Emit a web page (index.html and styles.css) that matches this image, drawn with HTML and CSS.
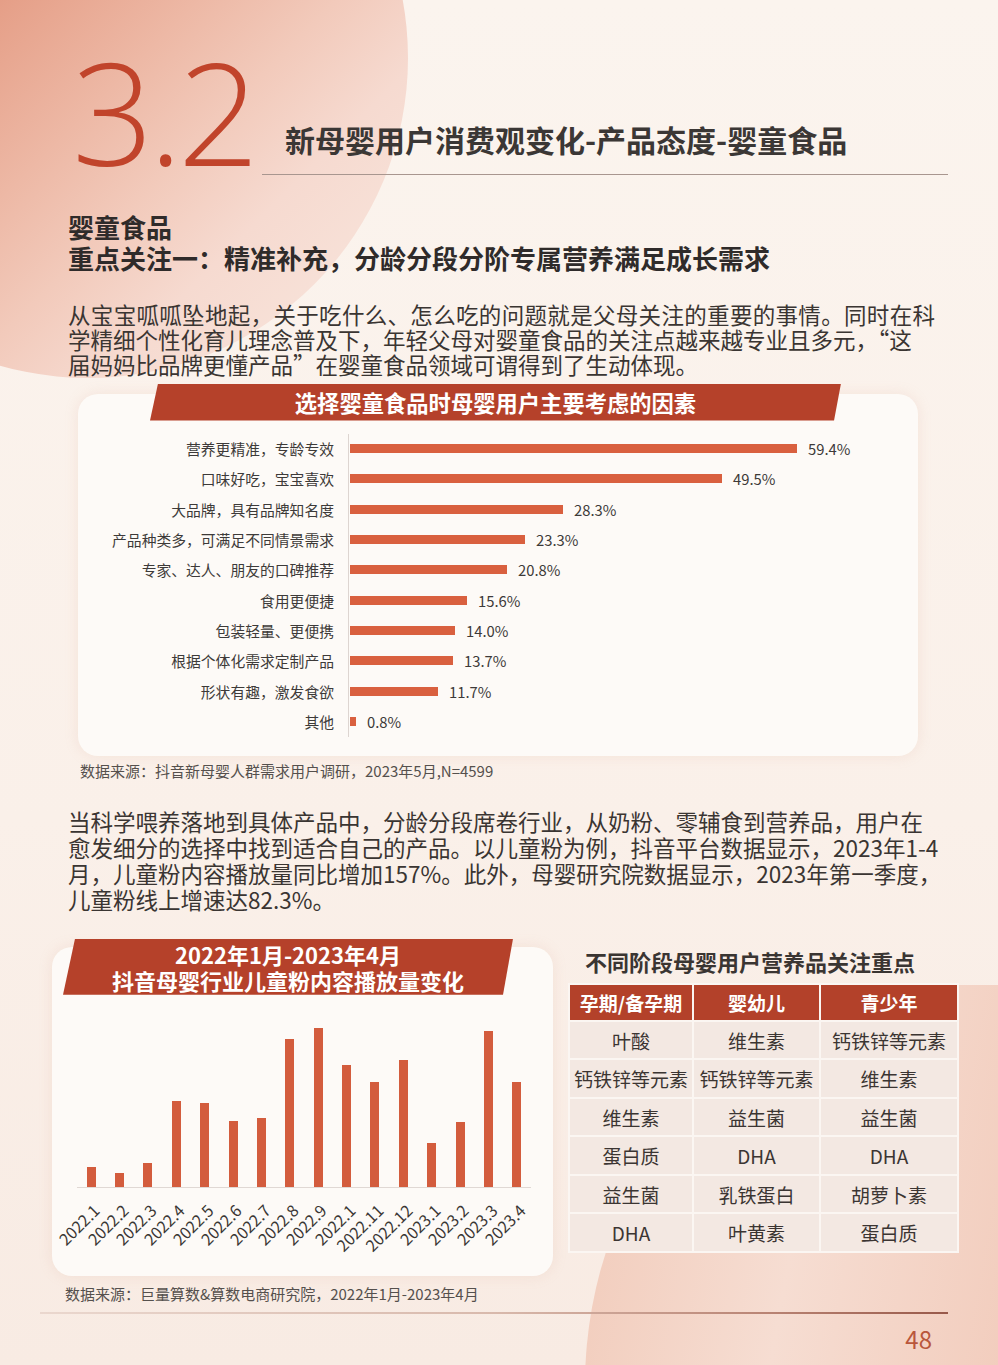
FILE: index.html
```html
<!DOCTYPE html>
<html lang="zh-CN">
<head>
<meta charset="utf-8">
<title>3.2 新母婴用户消费观变化-产品态度-婴童食品</title>
<link rel="stylesheet" href="styles.css">
</head>
<body>
<div class="page">
  <div class="content">
    <header class="hero">
      <div class="num">3.2</div>
      <div class="title-wrap"><h1 class="title">新母婴用户消费观变化-产品态度-婴童食品</h1></div>
    </header>

    <h2 class="sub">婴童食品<br>重点关注一：精准补充，分龄分段分阶专属营养满足成长需求</h2>

    <p class="para p1">
      <span class="ln just">从宝宝呱呱坠地起，关于吃什么、怎么吃的问题就是父母关注的重要的事情。同时在科</span>
      <span class="ln">学精细个性化育儿理念普及下，年轻父母对婴童食品的关注点越来越专业且多元，“这</span>
      <span class="ln">届妈妈比品牌更懂产品”在婴童食品领域可谓得到了生动体现。</span>
    </p>

    <section class="card card1">
      <div class="banner b1">选择婴童食品时母婴用户主要考虑的因素</div>
      <div class="hbars">
        <div class="hrow"><span class="hl">营养更精准，专龄专效</span><span class="hc"><i class="hb" style="width:447px"></i><b class="hv">59.4%</b></span></div>
        <div class="hrow"><span class="hl">口味好吃，宝宝喜欢</span><span class="hc"><i class="hb" style="width:372px"></i><b class="hv">49.5%</b></span></div>
        <div class="hrow"><span class="hl">大品牌，具有品牌知名度</span><span class="hc"><i class="hb" style="width:213px"></i><b class="hv">28.3%</b></span></div>
        <div class="hrow"><span class="hl">产品种类多，可满足不同情景需求</span><span class="hc"><i class="hb" style="width:175px"></i><b class="hv">23.3%</b></span></div>
        <div class="hrow"><span class="hl">专家、达人、朋友的口碑推荐</span><span class="hc"><i class="hb" style="width:157px"></i><b class="hv">20.8%</b></span></div>
        <div class="hrow"><span class="hl">食用更便捷</span><span class="hc"><i class="hb" style="width:117px"></i><b class="hv">15.6%</b></span></div>
        <div class="hrow"><span class="hl">包装轻量、更便携</span><span class="hc"><i class="hb" style="width:105px"></i><b class="hv">14.0%</b></span></div>
        <div class="hrow"><span class="hl">根据个体化需求定制产品</span><span class="hc"><i class="hb" style="width:103px"></i><b class="hv">13.7%</b></span></div>
        <div class="hrow"><span class="hl">形状有趣，激发食欲</span><span class="hc"><i class="hb" style="width:88px"></i><b class="hv">11.7%</b></span></div>
        <div class="hrow"><span class="hl">其他</span><span class="hc"><i class="hb" style="width:6px"></i><b class="hv">0.8%</b></span></div>
      </div>
    </section>
    <p class="source s1">数据来源：抖音新母婴人群需求用户调研，2023年5月,N=4599</p>

    <p class="para p2">
      <span class="ln">当科学喂养落地到具体产品中，分龄分段席卷行业，从奶粉、零辅食到营养品，用户在</span>
      <span class="ln">愈发细分的选择中找到适合自己的产品。以儿童粉为例，抖音平台数据显示，2023年1-4</span>
      <span class="ln">月，儿童粉内容播放量同比增加157%。此外，母婴研究院数据显示，2023年第一季度，</span>
      <span class="ln">儿童粉线上增速达82.3%。</span>
    </p>

    <div class="bottom">
      <div class="left">
        <section class="card card2">
          <div class="banner b2">2022年1月-2023年4月<br>抖音母婴行业儿童粉内容播放量变化</div>
          <div class="vchart">
            <div class="plot">
              <div class="col"><i class="vb" style="height:20px"></i></div>
              <div class="col"><i class="vb" style="height:14px"></i></div>
              <div class="col"><i class="vb" style="height:24px"></i></div>
              <div class="col"><i class="vb" style="height:86px"></i></div>
              <div class="col"><i class="vb" style="height:84px"></i></div>
              <div class="col"><i class="vb" style="height:66px"></i></div>
              <div class="col"><i class="vb" style="height:69px"></i></div>
              <div class="col"><i class="vb" style="height:148px"></i></div>
              <div class="col"><i class="vb" style="height:159px"></i></div>
              <div class="col"><i class="vb" style="height:122px"></i></div>
              <div class="col"><i class="vb" style="height:105px"></i></div>
              <div class="col"><i class="vb" style="height:127px"></i></div>
              <div class="col"><i class="vb" style="height:44px"></i></div>
              <div class="col"><i class="vb" style="height:65px"></i></div>
              <div class="col"><i class="vb" style="height:156px"></i></div>
              <div class="col"><i class="vb" style="height:105px"></i></div>
            </div>
            <div class="xlabels">
              <div class="xl"><div class="xlw"><span>2022.1</span></div></div>
              <div class="xl"><div class="xlw"><span>2022.2</span></div></div>
              <div class="xl"><div class="xlw"><span>2022.3</span></div></div>
              <div class="xl"><div class="xlw"><span>2022.4</span></div></div>
              <div class="xl"><div class="xlw"><span>2022.5</span></div></div>
              <div class="xl"><div class="xlw"><span>2022.6</span></div></div>
              <div class="xl"><div class="xlw"><span>2022.7</span></div></div>
              <div class="xl"><div class="xlw"><span>2022.8</span></div></div>
              <div class="xl"><div class="xlw"><span>2022.9</span></div></div>
              <div class="xl"><div class="xlw"><span>2022.1</span></div></div>
              <div class="xl"><div class="xlw"><span>2022.11</span></div></div>
              <div class="xl"><div class="xlw"><span>2022.12</span></div></div>
              <div class="xl"><div class="xlw"><span>2023.1</span></div></div>
              <div class="xl"><div class="xlw"><span>2023.2</span></div></div>
              <div class="xl"><div class="xlw"><span>2023.3</span></div></div>
              <div class="xl"><div class="xlw"><span>2023.4</span></div></div>
            </div>
          </div>
        </section>
        <p class="source s2">数据来源：巨量算数&amp;算数电商研究院，2022年1月-2023年4月</p>
      </div>

      <div class="right">
        <h3 class="ttitle">不同阶段母婴用户营养品关注重点</h3>
        <table class="ntable">
          <thead>
            <tr><th class="c1">孕期/备孕期</th><th class="c2">婴幼儿</th><th class="c3">青少年</th></tr>
          </thead>
          <tbody>
            <tr><td>叶酸</td><td>维生素</td><td>钙铁锌等元素</td></tr>
            <tr><td>钙铁锌等元素</td><td>钙铁锌等元素</td><td>维生素</td></tr>
            <tr><td>维生素</td><td>益生菌</td><td>益生菌</td></tr>
            <tr><td>蛋白质</td><td>DHA</td><td>DHA</td></tr>
            <tr><td>益生菌</td><td>乳铁蛋白</td><td>胡萝卜素</td></tr>
            <tr><td>DHA</td><td>叶黄素</td><td>蛋白质</td></tr>
          </tbody>
        </table>
      </div>
    </div>

    <footer class="foot">
      <div class="foot-line"></div>
      <div class="pno">48</div>
    </footer>
  </div>
</div>
</body>
</html>
```

FILE: styles.css
```css
* { box-sizing: border-box; }
html, body { margin: 0; padding: 0; }
body {
  background: #faf1ea;
  font-family: "Noto Sans CJK SC", "Noto Sans", sans-serif;
  color: #3a3431;
}
.page {
  position: relative;
  width: 998px;
  height: 1365px;
  overflow: hidden;
  background: linear-gradient(180deg, #fbf4ee 0%, #faf0e9 60%, #f8ebe3 100%);
}
/* top-left decorative disc */
.page::before {
  content: "";
  position: absolute;
  left: -232px;
  top: -262px;
  width: 640px;
  height: 640px;
  border-radius: 50%;
  background: linear-gradient(135deg, #de8a71 28%, #e6a18a 40%, #edb8a5 54%, #f2cabb 65%, #f6dad0 76%, #f8e4db 92%);
  z-index: 0;
}
/* bottom-right decorative shape */
.page::after {
  content: "";
  position: absolute;
  left: 585px;
  top: 985px;
  width: 480px;
  height: 460px;
  border-top-left-radius: 368px 400px;
  background: linear-gradient(100deg, #f1cab9 0%, #f6ddd2 45%, #f1c8b7 100%);
  z-index: 0;
}
.content { position: relative; z-index: 1; }

/* hero */
.hero {
  display: flex;
  align-items: flex-end;
  height: 175px;
}
.num {
  width: 262px;
  padding-left: 72px;
  margin-bottom: -7px;
  font-family: "Open Sans", "Liberation Sans", sans-serif;
  font-weight: 300;
  font-size: 143px;
  line-height: 143px;
  letter-spacing: -5px;
  color: #c1442b;
  white-space: nowrap;
}
.title-wrap {
  width: 686px;
  border-bottom: 1.5px solid #a8968f;
}
.title {
  margin: 0;
  padding: 0 0 17px 23px;
  font-size: 30px;
  line-height: 36px;
  font-weight: 700;
  color: #3b3735;
  white-space: nowrap;
}

.sub {
  margin: 36px 0 0 68px;
  font-size: 26px;
  line-height: 31px;
  font-weight: 700;
  color: #2f2b2a;
  white-space: nowrap;
}

.para {
  margin: 0 0 0 68px;
  width: 867px;
  font-size: 22.5px;
  line-height: 25px;
  color: #3a3532;
}
.para .ln { display: block; white-space: nowrap; }
.para .just { text-align: justify; text-align-last: justify; }
.p1 { margin-top: 29px; }
.p2 { margin-top: 27px; line-height: 26px; }

/* cards */
.card {
  display: flow-root;
  background: #fdfaf7;
  border-radius: 20px;
  box-shadow: 0 0 14px rgba(214, 160, 138, 0.18);
}
.banner {
  background: #b5412a;
  color: #fff;
  font-weight: 700;
  text-align: center;
  white-space: nowrap;
}
.card1 {
  margin: 16.5px 0 0 78px;
  width: 840px;
  padding-bottom: 19px;
}
.b1 {
  margin: -10px 0 0 72px;
  width: 691px;
  height: 37px;
  font-size: 22.3px;
  line-height: 37px;
  clip-path: polygon(8px 0, 100% 0, calc(100% - 7px) 100%, 0 100%);
}
.hbars { margin-top: 13px; }
.hrow {
  display: grid;
  grid-template-columns: 270px 1fr;
  height: 30.33px;
}
.hl {
  align-self: center;
  text-align: right;
  padding-right: 14px;
  font-size: 14.8px;
  color: #3d3a39;
  white-space: nowrap;
}
.hc {
  display: flex;
  align-items: center;
  border-left: 1px solid #ddd5d1;
  padding-left: 1px;
}
.hb {
  display: block;
  height: 9px;
  background: #d9603f;
}
.hv {
  margin-left: 11px;
  font-weight: 400;
  font-size: 14.8px;
  color: #3d3a39;
}

.source {
  margin: 0;
  font-size: 15px;
  line-height: 20px;
  color: #55504d;
  white-space: nowrap;
}
.s1 { margin: 5px 0 0 80px; }

/* bottom area */
.bottom {
  display: flex;
  align-items: flex-start;
  margin-top: 35px;
}
.left { margin-left: 52px; width: 501px; }
.card2 {
  width: 501px;
  height: 329px;
}
.b2 {
  margin: -8px 0 0 11px;
  width: 450px;
  height: 56px;
  padding-top: 2px;
  font-size: 22px;
  line-height: 26px;
  clip-path: polygon(12px 0, 100% 0, calc(100% - 10px) 100%, 0 100%);
}
.vchart { margin: 10px 0 0 25px; width: 454px; }
.plot {
  display: flex;
  align-items: flex-end;
  height: 183px;
  border-bottom: 1px solid #e0d8d4;
}
.col {
  flex: 1 1 0;
  min-width: 0;
  display: flex;
  justify-content: center;
}
.vb { display: block; width: 9px; background: #d35c3d; }
.xlabels { display: flex; }
.xl { flex: 1 1 0; min-width: 0; height: 64px; padding-top: 11px; }
.xlw {
  width: calc(50% + 5px);
  display: flex;
  justify-content: flex-end;
}
.xlw span {
  flex-shrink: 0;
  display: block;
  white-space: nowrap;
  font-size: 16px;
  line-height: 16px;
  color: #3a3634;
  transform-origin: 100% 50%;
  transform: rotate(-45deg);
}
.s2 { margin: 8px 0 0 13px; }

.right { margin-left: 15px; width: 391px; }
.ttitle {
  margin: 0 0 0 17px;
  font-size: 22px;
  line-height: 28px;
  font-weight: 700;
  color: #3a3532;
  white-space: nowrap;
}
.ntable {
  margin-top: 8px;
  border-collapse: separate;
  border-spacing: 2px;
  background: #fbf6f2;
  table-layout: fixed;
  width: 391px;
}
.ntable .c1 { width: 122px; }
.ntable .c2 { width: 125px; }
.ntable .c3 { width: 136px; }
.ntable th {
  height: 35px;
  padding: 0;
  background: #b3412a;
  color: #fff;
  font-size: 19px;
  font-weight: 700;
  white-space: nowrap;
}
.ntable td {
  height: 36.5px;
  padding: 0;
  background: #f3e8e2;
  color: #3b3532;
  font-size: 19px;
  text-align: center;
  white-space: nowrap;
}

.foot { margin-top: 8px; }
.foot-line {
  margin-left: 40px;
  width: 908px;
  height: 2px;
  background: linear-gradient(90deg, #ead7ce 0%, #d8b9ac 50%, #b98474 80%, #98594a 100%);
}
.pno {
  margin-top: 12px;
  padding-right: 66px;
  text-align: right;
  font-size: 24px;
  line-height: 26px;
  color: #b9573c;
}
```
